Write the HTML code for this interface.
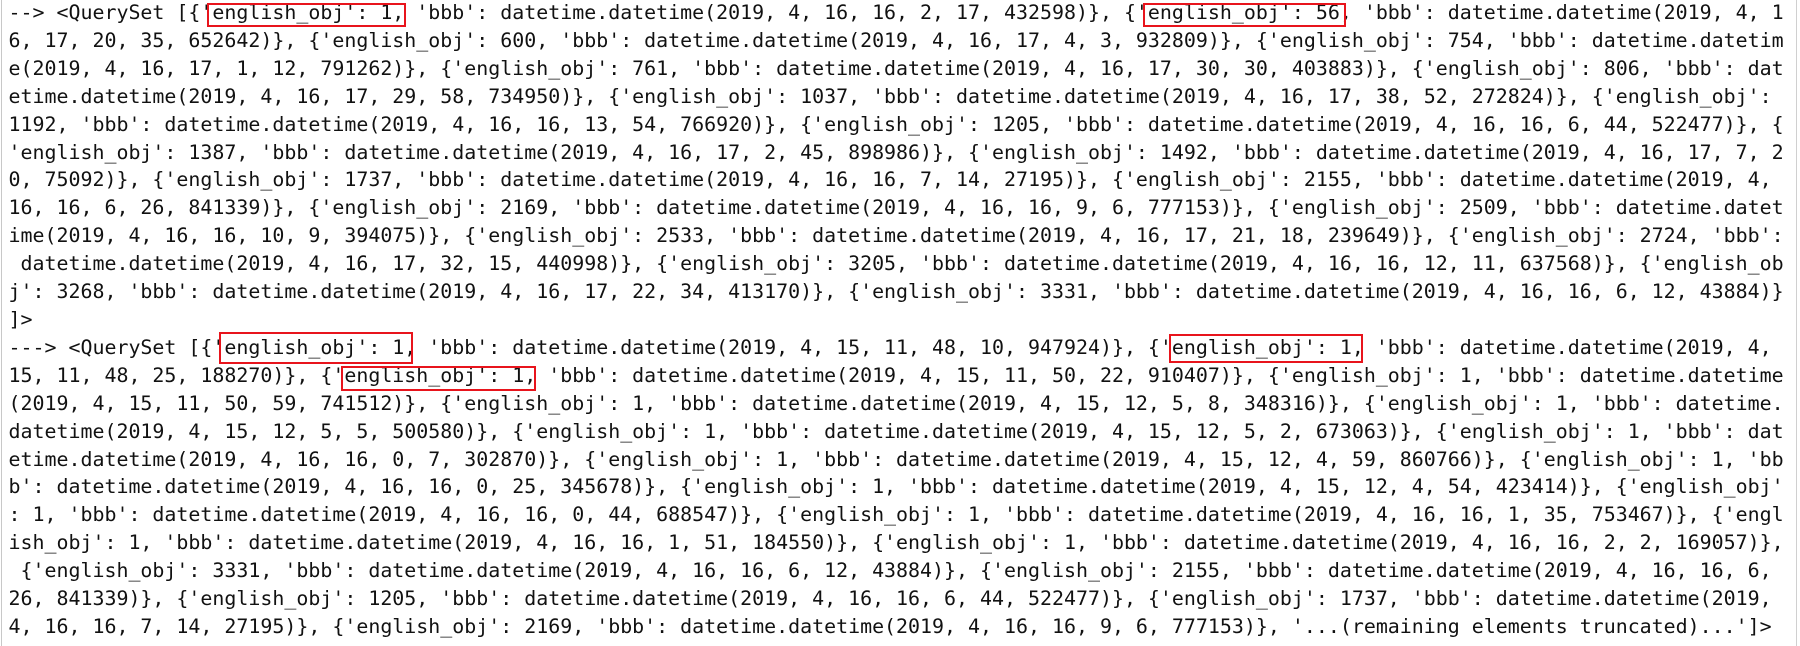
<!DOCTYPE html>
<html><head><meta charset="utf-8"><style>
html,body{margin:0;padding:0;background:#fff;width:1800px;height:646px;overflow:hidden;position:relative}
.bl{position:absolute;left:1px;top:0;width:1px;height:646px;background:#c8c8c8}
.br{position:absolute;left:1796px;top:0;width:1px;height:646px;background:#d0d0d0}
pre{position:absolute;left:8.5px;top:-1px;margin:0;font-family:"DejaVu Sans Mono","Liberation Mono",monospace;font-size:19.93px;line-height:27.9px;color:#111;white-space:pre}
.b{position:absolute;border:2px solid #e8141c;box-sizing:border-box}
</style></head><body>
<div class="bl"></div><div class="br"></div>
<pre>--&gt; &lt;QuerySet [{'english_obj': 1, 'bbb': datetime.datetime(2019, 4, 16, 16, 2, 17, 432598)}, {'english_obj': 56, 'bbb': datetime.datetime(2019, 4, 1
6, 17, 20, 35, 652642)}, {'english_obj': 600, 'bbb': datetime.datetime(2019, 4, 16, 17, 4, 3, 932809)}, {'english_obj': 754, 'bbb': datetime.datetim
e(2019, 4, 16, 17, 1, 12, 791262)}, {'english_obj': 761, 'bbb': datetime.datetime(2019, 4, 16, 17, 30, 30, 403883)}, {'english_obj': 806, 'bbb': dat
etime.datetime(2019, 4, 16, 17, 29, 58, 734950)}, {'english_obj': 1037, 'bbb': datetime.datetime(2019, 4, 16, 17, 38, 52, 272824)}, {'english_obj': 
1192, 'bbb': datetime.datetime(2019, 4, 16, 16, 13, 54, 766920)}, {'english_obj': 1205, 'bbb': datetime.datetime(2019, 4, 16, 16, 6, 44, 522477)}, {
'english_obj': 1387, 'bbb': datetime.datetime(2019, 4, 16, 17, 2, 45, 898986)}, {'english_obj': 1492, 'bbb': datetime.datetime(2019, 4, 16, 17, 7, 2
0, 75092)}, {'english_obj': 1737, 'bbb': datetime.datetime(2019, 4, 16, 16, 7, 14, 27195)}, {'english_obj': 2155, 'bbb': datetime.datetime(2019, 4, 
16, 16, 6, 26, 841339)}, {'english_obj': 2169, 'bbb': datetime.datetime(2019, 4, 16, 16, 9, 6, 777153)}, {'english_obj': 2509, 'bbb': datetime.datet
ime(2019, 4, 16, 16, 10, 9, 394075)}, {'english_obj': 2533, 'bbb': datetime.datetime(2019, 4, 16, 17, 21, 18, 239649)}, {'english_obj': 2724, 'bbb':
 datetime.datetime(2019, 4, 16, 17, 32, 15, 440998)}, {'english_obj': 3205, 'bbb': datetime.datetime(2019, 4, 16, 16, 12, 11, 637568)}, {'english_ob
j': 3268, 'bbb': datetime.datetime(2019, 4, 16, 17, 22, 34, 413170)}, {'english_obj': 3331, 'bbb': datetime.datetime(2019, 4, 16, 16, 6, 12, 43884)}
]&gt;
---&gt; &lt;QuerySet [{'english_obj': 1, 'bbb': datetime.datetime(2019, 4, 15, 11, 48, 10, 947924)}, {'english_obj': 1, 'bbb': datetime.datetime(2019, 4, 
15, 11, 48, 25, 188270)}, {'english_obj': 1, 'bbb': datetime.datetime(2019, 4, 15, 11, 50, 22, 910407)}, {'english_obj': 1, 'bbb': datetime.datetime
(2019, 4, 15, 11, 50, 59, 741512)}, {'english_obj': 1, 'bbb': datetime.datetime(2019, 4, 15, 12, 5, 8, 348316)}, {'english_obj': 1, 'bbb': datetime.
datetime(2019, 4, 15, 12, 5, 5, 500580)}, {'english_obj': 1, 'bbb': datetime.datetime(2019, 4, 15, 12, 5, 2, 673063)}, {'english_obj': 1, 'bbb': dat
etime.datetime(2019, 4, 16, 16, 0, 7, 302870)}, {'english_obj': 1, 'bbb': datetime.datetime(2019, 4, 15, 12, 4, 59, 860766)}, {'english_obj': 1, 'bb
b': datetime.datetime(2019, 4, 16, 16, 0, 25, 345678)}, {'english_obj': 1, 'bbb': datetime.datetime(2019, 4, 15, 12, 4, 54, 423414)}, {'english_obj'
: 1, 'bbb': datetime.datetime(2019, 4, 16, 16, 0, 44, 688547)}, {'english_obj': 1, 'bbb': datetime.datetime(2019, 4, 16, 16, 1, 35, 753467)}, {'engl
ish_obj': 1, 'bbb': datetime.datetime(2019, 4, 16, 16, 1, 51, 184550)}, {'english_obj': 1, 'bbb': datetime.datetime(2019, 4, 16, 16, 2, 2, 169057)},
 {'english_obj': 3331, 'bbb': datetime.datetime(2019, 4, 16, 16, 6, 12, 43884)}, {'english_obj': 2155, 'bbb': datetime.datetime(2019, 4, 16, 16, 6, 
26, 841339)}, {'english_obj': 1205, 'bbb': datetime.datetime(2019, 4, 16, 16, 6, 44, 522477)}, {'english_obj': 1737, 'bbb': datetime.datetime(2019, 
4, 16, 16, 7, 14, 27195)}, {'english_obj': 2169, 'bbb': datetime.datetime(2019, 4, 16, 16, 9, 6, 777153)}, '...(remaining elements truncated)...']&gt;</pre>
<div class="b" style="left:207px;top:3px;width:199px;height:24px"></div>
<div class="b" style="left:1143px;top:3px;width:203px;height:24px"></div>
<div class="b" style="left:219px;top:332px;width:194px;height:32px"></div>
<div class="b" style="left:1169px;top:334px;width:194px;height:29px"></div>
<div class="b" style="left:341px;top:366px;width:195px;height:25px"></div>
</body></html>
